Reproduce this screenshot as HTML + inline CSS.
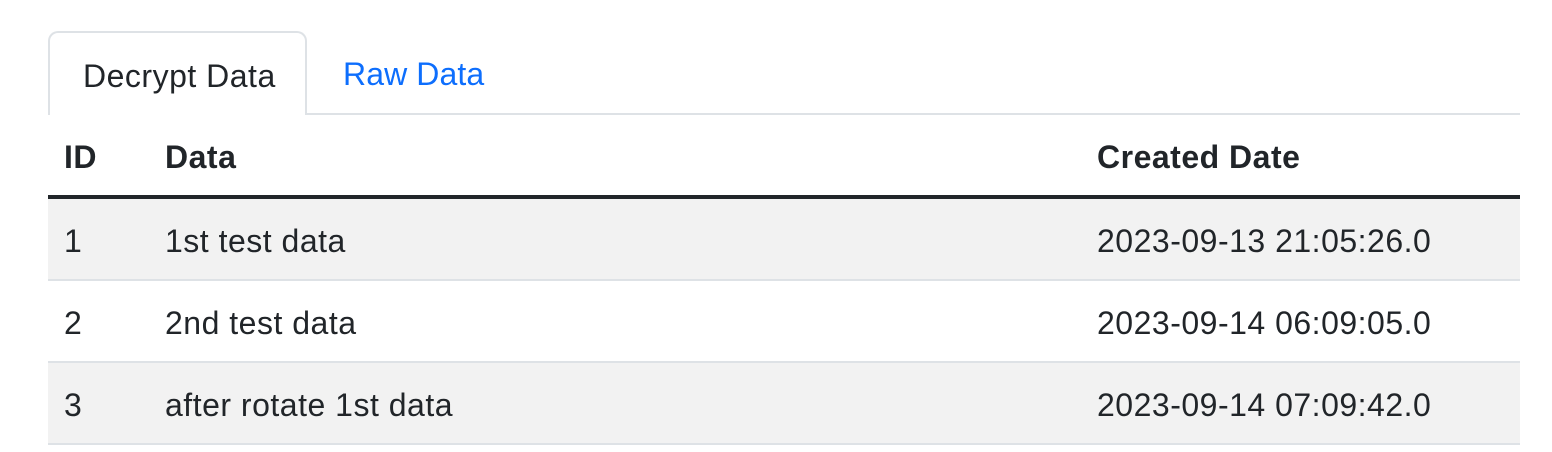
<!DOCTYPE html>
<html><head><style>
body{margin:0;background:#fff;font-family:"Liberation Sans",Arial,sans-serif;color:#212529;font-size:32px;letter-spacing:0.5px;}
.wrap{position:absolute;left:48px;top:31px;width:1472px;}
.nav{height:82px;border-bottom:2px solid #dee2e6;position:relative;}
.tab{position:absolute;top:0;height:82px;line-height:86px;box-sizing:border-box;}
.t1{left:0;width:259px;border:2px solid #dee2e6;border-bottom:none;border-radius:10px 10px 0 0;background:#fff;height:84px;padding-left:33px;}
.t2{left:295px;color:#0d6efd;letter-spacing:0.1px;}
table{border-collapse:collapse;width:1472px;}
th,td{text-align:left;padding:4px 16px 0;height:76px;}
th{font-weight:bold;border-bottom:4px solid #212529;}
td{border-bottom:2px solid #dee2e6;}
tr.s td{background:#f2f2f2;}
</style></head><body>
<div class="wrap">
<div class="nav"><div class="tab t1">Decrypt Data</div><div class="tab t2">Raw Data</div></div>
<table>
<tr><th style="width:69px">ID</th><th style="width:900px">Data</th><th>Created Date</th></tr>
<tr class="s"><td>1</td><td>1st test data</td><td>2023-09-13 21:05:26.0</td></tr>
<tr><td>2</td><td>2nd test data</td><td>2023-09-14 06:09:05.0</td></tr>
<tr class="s"><td>3</td><td>after rotate 1st data</td><td>2023-09-14 07:09:42.0</td></tr>
</table>
</div>
</body></html>
